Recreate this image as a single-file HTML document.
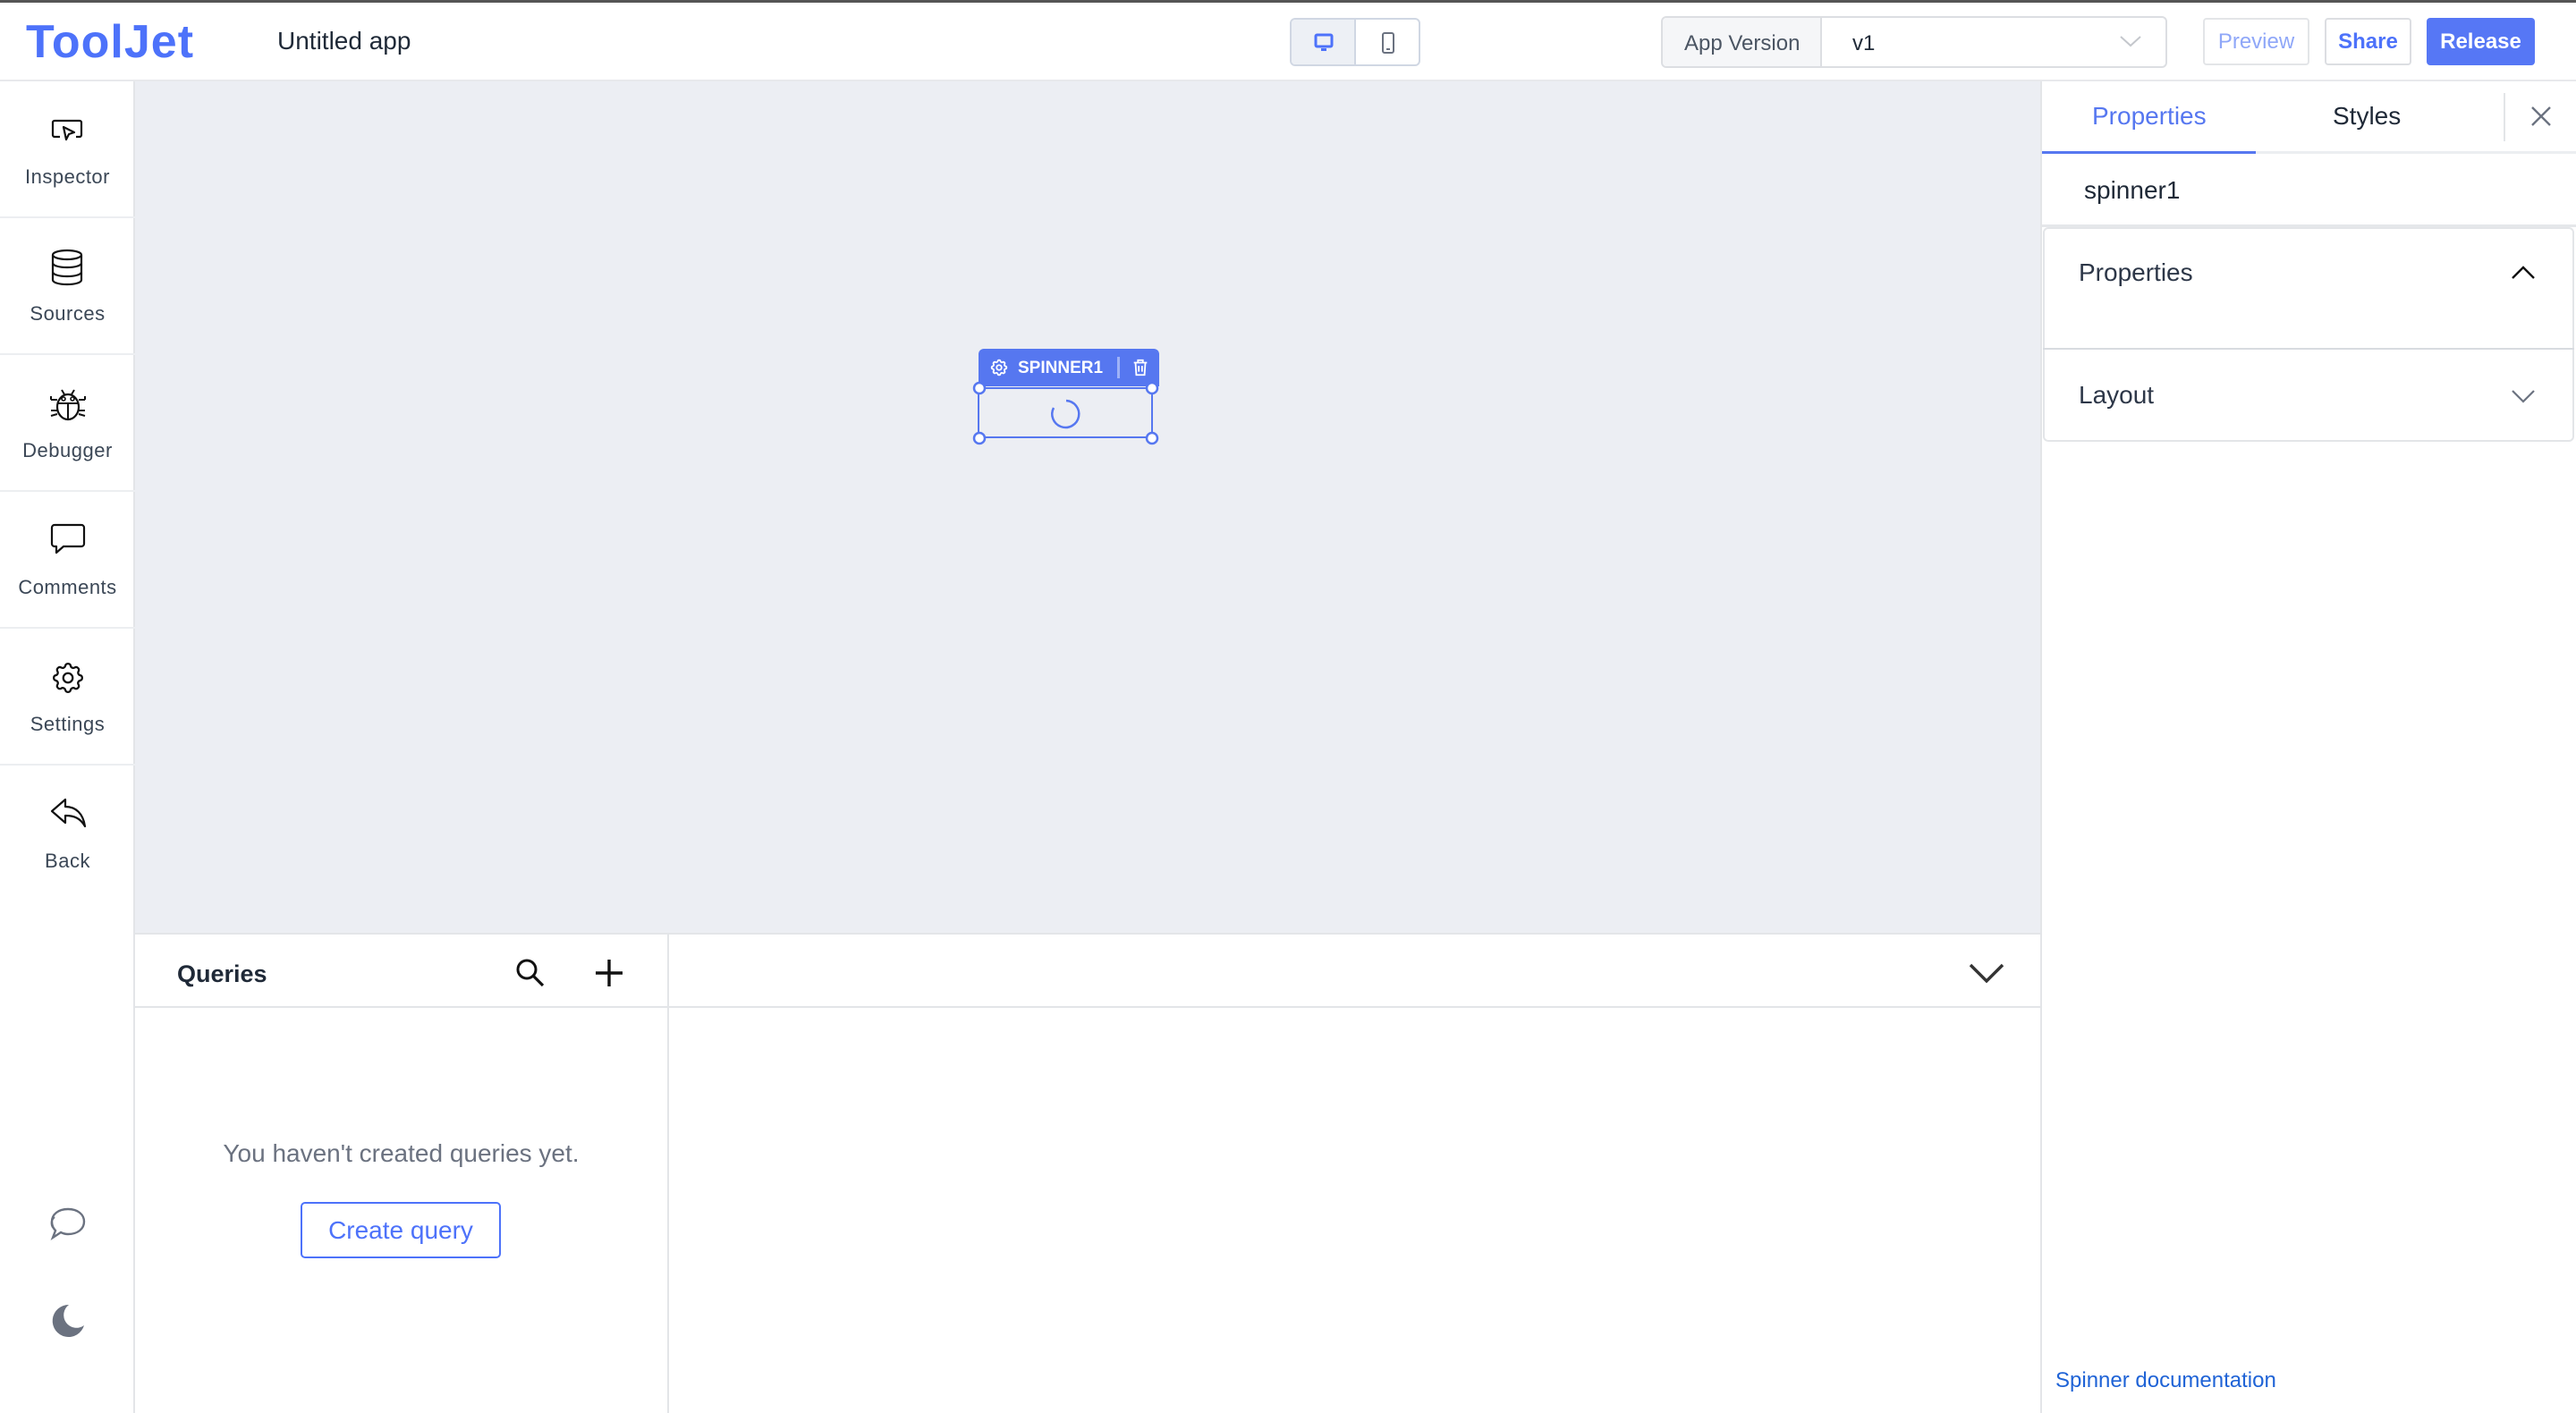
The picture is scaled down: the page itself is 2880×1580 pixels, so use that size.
<!DOCTYPE html>
<html><head><meta charset="utf-8"><style>
*{box-sizing:border-box;margin:0;padding:0}
body{width:2880px;height:1580px;overflow:hidden;font-family:"Liberation Sans",sans-serif;background:#fff;position:relative;color:#1f2937}
.a{position:absolute}
.side-item{position:absolute;left:0;width:151px;height:153px;border-bottom:2px solid #eceef1;text-align:center}
.side-item svg{position:absolute;left:55px;top:34px}
.side-item span{position:absolute;left:0;right:0;top:94px;font-size:22px;color:#3b4756;letter-spacing:.5px}
</style></head><body>
<div class="a" style="left:0;top:0;width:2880px;height:3px;background:#555"></div>
<!-- header -->
<div class="a" style="left:0;top:3px;width:2880px;height:88px;border-bottom:2px solid #e8e9ec;background:#fff"></div>
<div class="a" style="left:29px;top:17px;font-size:52px;font-weight:bold;color:#4d72fa;letter-spacing:1px">ToolJet</div>
<div class="a" style="left:310px;top:30px;font-size:28px;color:#1f2937">Untitled app</div>
<div class="a" style="left:1442px;top:20px;width:146px;height:54px;border:2px solid #d0d7e3;border-radius:6px;overflow:hidden">
 <div class="a" style="left:0;top:0;width:72px;height:52px;background:#edf0f5;border-right:2px solid #d0d7e3"></div>
 <svg class="a" style="left:24px;top:14px" width="24" height="24" viewBox="0 0 24 24"><rect x="3" y="3" width="18" height="13" rx="1.5" fill="none" stroke="#4d72fa" stroke-width="3"/><rect x="9" y="18" width="6" height="3" fill="#4d72fa"/></svg>
 <svg class="a" style="left:98px;top:13px" width="20" height="26" viewBox="0 0 20 26"><rect x="4" y="2" width="12" height="22" rx="2" fill="none" stroke="#6b7280" stroke-width="2"/><rect x="8" y="19" width="4" height="2" fill="#6b7280"/></svg>
</div>
<div class="a" style="left:1857px;top:18px;width:566px;height:58px;border:2px solid #dcdee2;border-radius:6px;overflow:hidden">
 <div class="a" style="left:0;top:0;width:178px;height:54px;background:#f5f6f8;border-right:2px solid #dcdee2"></div>
 <div class="a" style="left:24px;top:15px;font-size:24px;color:#4b5563">App Version</div>
 <div class="a" style="left:212px;top:15px;font-size:24px;color:#1f2937">v1</div>
 <svg class="a" style="left:510px;top:18px" width="26" height="16" viewBox="0 0 26 16"><path d="M2 3 L13 13 L24 3" fill="none" stroke="#c4c7cc" stroke-width="2"/></svg>
</div>
<div class="a" style="left:2463px;top:20px;width:119px;height:53px;border:2px solid #e3e5e8;border-radius:4px;color:#8fa7f8;font-size:24px;text-align:center;line-height:49px">Preview</div>
<div class="a" style="left:2599px;top:20px;width:97px;height:53px;border:2px solid #dcdee2;border-radius:4px;color:#4d72fa;font-size:24px;font-weight:bold;text-align:center;line-height:49px">Share</div>
<div class="a" style="left:2713px;top:20px;width:121px;height:53px;background:#5677f5;border-radius:4px;color:#fff;font-size:24px;font-weight:bold;text-align:center;line-height:53px">Release</div>
<!-- sidebar -->
<div class="a" style="left:0;top:91px;width:151px;height:1489px;border-right:2px solid #e3e5e8;background:#fff">
 <div class="side-item" style="top:0">
  <svg width="40" height="40" viewBox="0 0 40 40" style="top:36px"><path d="M12 26 H6 a2 2 0 0 1 -2-2 V10 a2 2 0 0 1 2-2 H34 a2 2 0 0 1 2 2 V24 a2 2 0 0 1 -2 2 H30" fill="none" stroke="#111" stroke-width="2.2"/><path d="M16 15 L28 21 L22 23 L19 29 Z" fill="none" stroke="#111" stroke-width="2.2" stroke-linejoin="round"/></svg>
  <span>Inspector</span></div>
 <div class="side-item" style="top:153px">
  <svg width="40" height="42" viewBox="0 0 40 42"><ellipse cx="20" cy="7" rx="16" ry="5" fill="none" stroke="#111" stroke-width="2.2"/><path d="M4 7 V35 c0 3 7 5 16 5 s16-2 16-5 V7 M4 16 c0 3 7 5 16 5 s16-2 16-5 M4 26 c0 3 7 5 16 5 s16-2 16-5" fill="none" stroke="#111" stroke-width="2.2"/></svg>
  <span>Sources</span></div>
 <div class="side-item" style="top:306px">
  <svg width="42" height="42" viewBox="0 0 42 42"><ellipse cx="21" cy="24" rx="12" ry="14" fill="none" stroke="#111" stroke-width="2.2"/><path d="M9 20 H33 M21 20 V38 M14 5 L17 10 M28 5 L25 10 M2 16 H9 M2 16 V12 M40 16 H33 M40 16 V12 M2 28 H9 M40 28 H33 M2 34 L9 32 M40 34 L33 32" fill="none" stroke="#111" stroke-width="2"/><circle cx="16" cy="15" r="2" fill="none" stroke="#111" stroke-width="1.6"/><circle cx="26" cy="15" r="2" fill="none" stroke="#111" stroke-width="1.6"/></svg>
  <span>Debugger</span></div>
 <div class="side-item" style="top:459px">
  <svg width="42" height="40" viewBox="0 0 42 40"><path d="M6 3 H36 a3 3 0 0 1 3 3 V24 a3 3 0 0 1 -3 3 H16 L8 34 V27 H6 a3 3 0 0 1 -3-3 V6 a3 3 0 0 1 3-3 Z" fill="none" stroke="#111" stroke-width="2.2" stroke-linejoin="round"/></svg>
  <span>Comments</span></div>
 <div class="side-item" style="top:612px">
  <svg width="42" height="42" viewBox="0 0 24 24"><path d="M10.3 4.3c.4-1.8 3-1.8 3.4 0a1.7 1.7 0 0 0 2.6 1.1c1.5-.9 3.3.8 2.4 2.4a1.7 1.7 0 0 0 1 2.5c1.8.4 1.8 3 0 3.4a1.7 1.7 0 0 0-1 2.6c.9 1.5-.8 3.300-2.4 2.4a1.7 1.7 0 0 0-2.6 1c-.4 1.8-3 1.8-3.4 0a1.7 1.7 0 0 0-2.6-1c-1.5.9-3.3-.8-2.4-2.4a1.7 1.7 0 0 0-1-2.6c-1.8-.4-1.8-3 0-3.4a1.7 1.7 0 0 0 1-2.5c-.9-1.6.8-3.3 2.4-2.4 1 .6 2.3.1 2.6-1.1z" fill="none" stroke="#111" stroke-width="1.3"/><circle cx="12" cy="12" r="3" fill="none" stroke="#111" stroke-width="1.3"/></svg>
  <span>Settings</span></div>
 <div class="side-item" style="top:765px;border-bottom:none">
  <svg width="44" height="40" viewBox="0 0 44 40"><path d="M18 4 L3 17 L18 30 V22 C28 22 35 25 40 34 C38 20 30 12 18 12 Z" fill="none" stroke="#111" stroke-width="2.2" stroke-linejoin="round"/></svg>
  <span>Back</span></div>
 <svg class="a" style="left:52px;top:1255px" width="46" height="46" viewBox="0 0 46 46"><path d="M24 6 C35 6 42 12 42 20 C42 28 35 34 24 34 C21 34 18 33 16 32 L7 38 L10 30 C7 27 6 24 6 20 C6 12 13 6 24 6 Z" fill="none" stroke="#6b7280" stroke-width="2.4"/><path d="M9 15 C4 19 5 26 9 28" fill="none" stroke="#6b7280" stroke-width="2"/></svg>
 <svg class="a" style="left:55px;top:1365px" width="42" height="42" viewBox="0 0 42 42"><path d="M22 3 A18 18 0 1 0 39 26 A14 14 0 0 1 22 3 Z" fill="#6b7280"/></svg>
</div>
<!-- canvas -->
<div class="a" style="left:151px;top:91px;width:2130px;height:952px;background:#eceef3"></div>
<div class="a" style="left:1094px;top:390px;width:202px;height:42px;background:#5677f0;border-radius:6px 6px 0 0;color:#fff;font-weight:bold;font-size:19px">
 <svg class="a" style="left:12px;top:10px" width="22" height="22" viewBox="0 0 24 24"><path d="M10.3 4.3c.4-1.8 3-1.8 3.4 0a1.7 1.7 0 0 0 2.6 1.1c1.5-.9 3.3.8 2.4 2.4a1.7 1.7 0 0 0 1 2.5c1.8.4 1.8 3 0 3.4a1.7 1.7 0 0 0-1 2.6c.9 1.5-.8 3.3-2.4 2.4a1.7 1.7 0 0 0-2.6 1c-.4 1.8-3 1.8-3.4 0a1.7 1.7 0 0 0-2.6-1c-1.5.9-3.3-.8-2.4-2.4a1.7 1.7 0 0 0-1-2.6c-1.8-.4-1.8-3 0-3.4a1.7 1.7 0 0 0 1-2.5c-.9-1.6.8-3.3 2.4-2.4 1 .6 2.3.1 2.6-1.1z" fill="none" stroke="#fff" stroke-width="2"/><circle cx="12" cy="12" r="3" fill="none" stroke="#fff" stroke-width="2"/></svg>
 <div class="a" style="left:44px;top:11px">SPINNER1</div>
 <div class="a" style="left:155px;top:9px;width:3px;height:24px;background:#9fb2f7"></div>
 <svg class="a" style="left:170px;top:10px" width="22" height="22" viewBox="0 0 24 24"><path d="M4 6 H20 M9 6 V3 H15 V6 M6 6 L7 21 H17 L18 6 M10 10 V17 M14 10 V17" fill="none" stroke="#fff" stroke-width="2"/></svg>
</div>
<div class="a" style="left:1093px;top:433px;width:196px;height:57px;border:2px solid #5677f0"></div>
<svg class="a" style="left:1080px;top:420px" width="222" height="84" viewBox="0 0 222 84">
 <g fill="#fff" stroke="#5677f0" stroke-width="2.5"><circle cx="15" cy="14" r="6"/><circle cx="208" cy="14" r="6"/><circle cx="15" cy="70" r="6"/><circle cx="208" cy="70" r="6"/></g>
 <path d="M112 28 A15 15 0 1 1 98 36" fill="none" stroke="#5677f0" stroke-width="2.5"/>
</svg>
<!-- right panel -->
<div class="a" style="left:2281px;top:91px;width:599px;height:1489px;background:#fff;border-left:2px solid #e3e5e8"></div>
<div class="a" style="left:2283px;top:169px;width:597px;height:3px;background:#eceef1"></div>
<div class="a" style="left:2283px;top:169px;width:239px;height:3px;background:#5677f0"></div>
<div class="a" style="left:2339px;top:114px;font-size:28px;color:#5677f0">Properties</div>
<div class="a" style="left:2608px;top:114px;font-size:28px;color:#1f2937">Styles</div>
<div class="a" style="left:2799px;top:104px;width:2px;height:54px;background:#e3e5e8"></div>
<svg class="a" style="left:2828px;top:117px" width="26" height="26" viewBox="0 0 26 26"><path d="M3 3 L23 23 M23 3 L3 23" stroke="#6b7280" stroke-width="2.4"/></svg>
<div class="a" style="left:2330px;top:197px;font-size:28px;color:#1f2937">spinner1</div>
<div class="a" style="left:2283px;top:251px;width:597px;height:3px;background:#e5e7ea"></div>
<div class="a" style="left:2284px;top:254px;width:594px;height:240px;border:2px solid #e3e5e8;border-radius:6px"></div>
<div class="a" style="left:2284px;top:389px;width:594px;height:2px;background:#d8dbe0"></div>
<div class="a" style="left:2324px;top:289px;font-size:28px;color:#2d3748">Properties</div>
<svg class="a" style="left:2806px;top:295px" width="30" height="20" viewBox="0 0 30 20"><path d="M3 16 L15 4 L27 16" fill="none" stroke="#111" stroke-width="2.4"/></svg>
<div class="a" style="left:2324px;top:426px;font-size:28px;color:#2d3748">Layout</div>
<svg class="a" style="left:2806px;top:433px" width="30" height="20" viewBox="0 0 30 20"><path d="M3 4 L15 16 L27 4" fill="none" stroke="#6b7280" stroke-width="2.2"/></svg>
<div class="a" style="left:2298px;top:1530px;font-size:24px;color:#1f63d6">Spinner documentation</div>
<!-- queries -->
<div class="a" style="left:151px;top:1043px;width:2130px;height:537px;background:#fff;border-top:2px solid #e3e5e8"></div>
<div class="a" style="left:151px;top:1125px;width:2130px;height:2px;background:#e3e5e8"></div>
<div class="a" style="left:746px;top:1045px;width:2px;height:535px;background:#e3e5e8"></div>
<div class="a" style="left:198px;top:1074px;font-size:27px;font-weight:bold;color:#1f2937">Queries</div>
<svg class="a" style="left:575px;top:1070px" width="36" height="36" viewBox="0 0 36 36"><circle cx="14" cy="14" r="10" fill="none" stroke="#111" stroke-width="3"/><path d="M21 21 L32 32" stroke="#111" stroke-width="3.2"/></svg>
<svg class="a" style="left:663px;top:1070px" width="36" height="36" viewBox="0 0 36 36"><path d="M18 3 V33 M3 18 H33" stroke="#111" stroke-width="3.4"/></svg>
<svg class="a" style="left:2200px;top:1075px" width="42" height="26" viewBox="0 0 42 26"><path d="M3 4 L21 22 L39 4" fill="none" stroke="#333" stroke-width="3.4"/></svg>
<div class="a" style="left:151px;top:1274px;width:595px;text-align:center;font-size:28px;color:#6b7280">You haven't created queries yet.</div>
<div class="a" style="left:336px;top:1344px;width:224px;height:63px;border:2px solid #4d72fa;border-radius:5px;color:#4d72fa;font-size:28px;text-align:center;line-height:59px">Create query</div>
</body></html>
